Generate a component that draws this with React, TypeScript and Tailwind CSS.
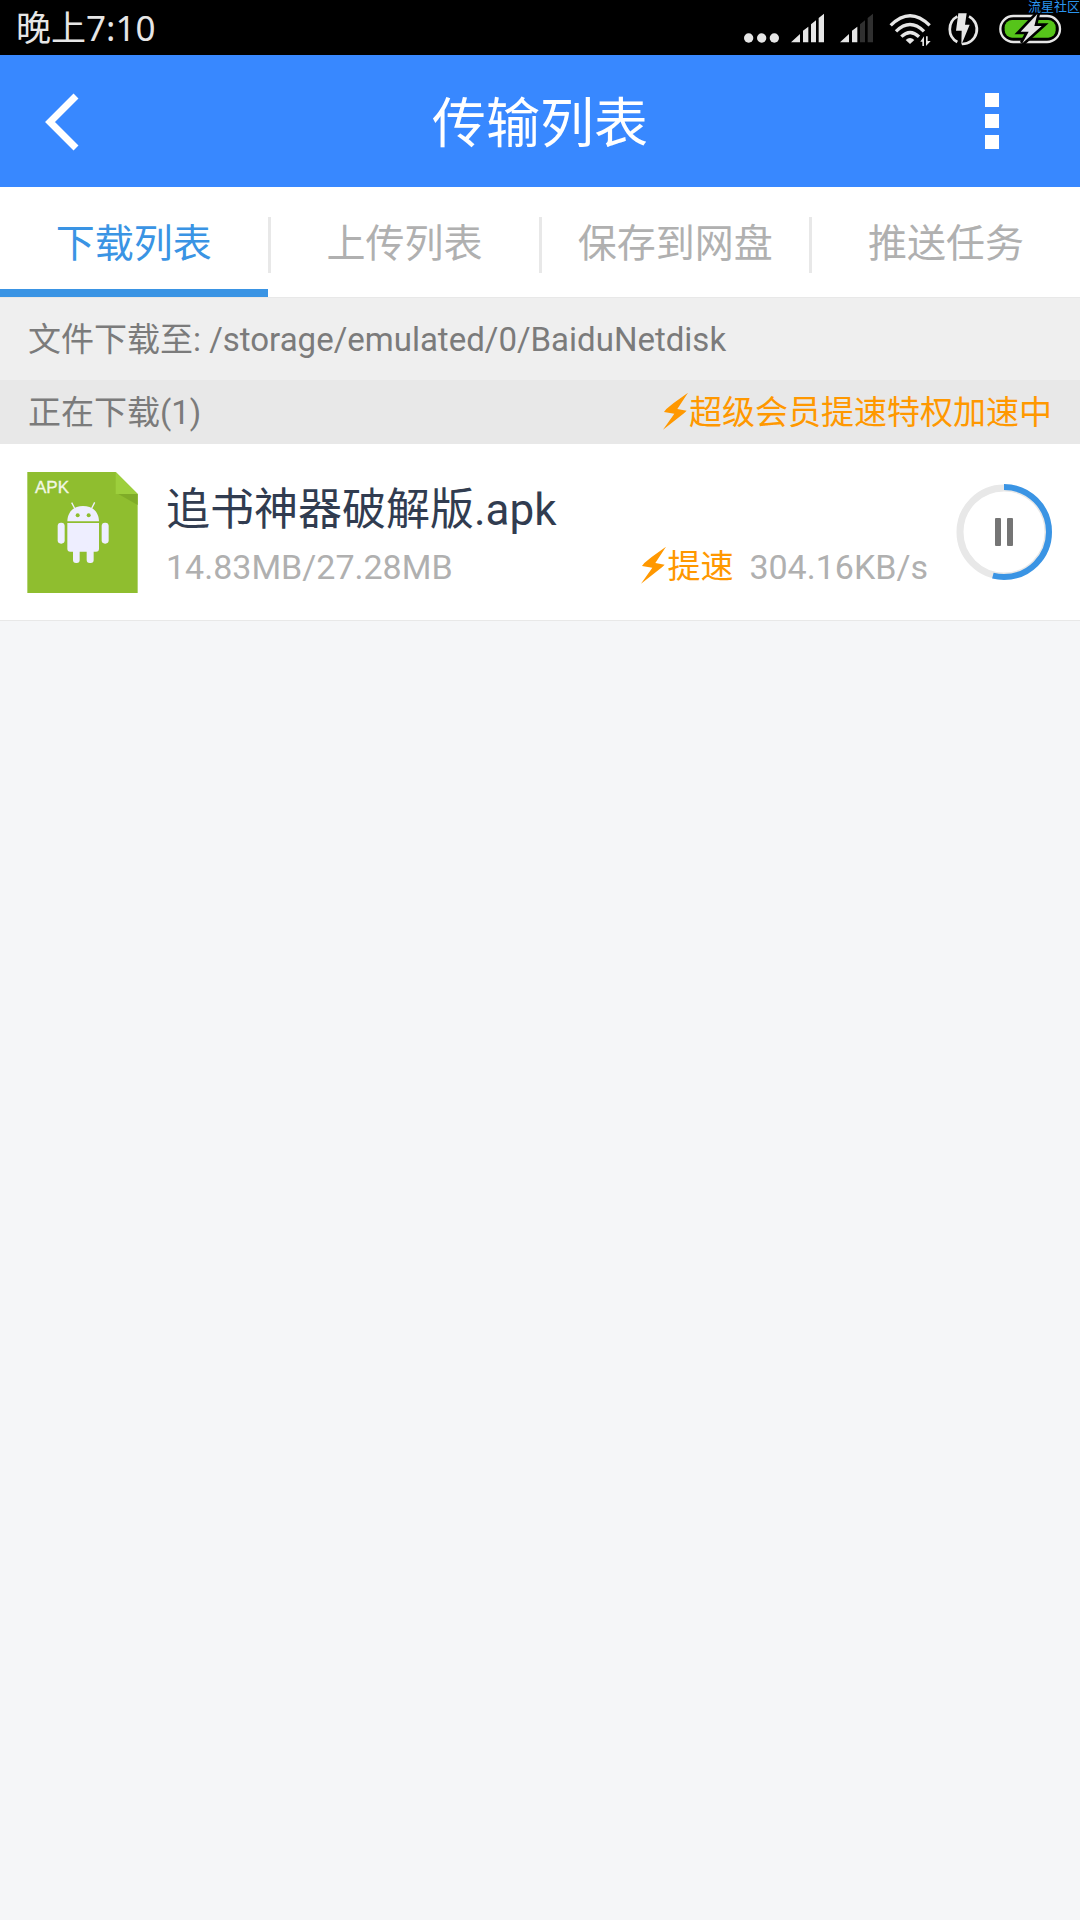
import React from "react";

const TABS = ["下载列表", "上传列表", "保存到网盘", "推送任务"];

const TASK = {
  name: "追书神器破解版.apk",
  done: 14.83,
  total: 27.28,
  speed: "304.16KB/s",
};

function Bolt() {
  return (
    <svg width="26" height="38" viewBox="68 315 78 114" className="mb-1" aria-hidden="true">
      <path d="M143 317 L100 348 L78 366 L71 375 L102 380 L68 428 L131 379 L139 371 L111 366 Z" fill="#ff9800" />
    </svg>
  );
}

function StatusIcons() {
  return (
    <svg width="330" height="40" viewBox="30 20 990 120" fill="#e6e6e6" aria-hidden="true">
      {/* network dots */}
      <circle cx="56" cy="110" r="14" />
      <circle cx="95" cy="110" r="14" />
      <circle cx="133" cy="110" r="14" />
      {/* sim 1 */}
      <path d="M183 123 L210 98 V123 Z M219 88 L235 76 V123 H219 Z M243 69 L258 57 V123 H243 Z M266 50 L282 37 V123 H266 Z" />
      {/* sim 2 */}
      <path d="M330 123 L357 98 V123 Z M366 88 L382 76 V123 H366 Z" />
      <path d="M390 69 L405 57 V123 H390 Z M413 50 L429 37 V123 H413 Z" fill="#303030" />
      {/* wifi */}
      <g fill="none" stroke="#e6e6e6" strokeWidth="10">
        <path d="M482 72 Q540 14 599 72" />
        <path d="M498 90 Q540 49 582 90" />
        <path d="M514 106 Q540 81 567 106" />
      </g>
      <path d="M527 116 Q540 104 553 116 L540 128 Z" />
      <path d="M571 121 L582 105 V134 H577 V121 Z M588 105 H593 V119 H602 L588 134 Z" />
      {/* quick charge */}
      <g fill="none" stroke="#e6e6e6" strokeWidth="8">
        <path d="M682 45 A44 44 0 0 0 682 122" />
        <path d="M717 45 A44 44 0 0 1 696 128" />
      </g>
      <path d="M685 36 H710 L705 70 H719 L694 131 L695 88 H678 Z" />
      {/* battery */}
      <rect x="811" y="44" width="179" height="78" rx="39" fill="none" stroke="#e6e6e6" strokeWidth="7" />
      <rect x="824" y="56" width="153" height="53" rx="22" fill="#56c41a" />
      <path
        d="M922 38 L872 91 H896 L877 126 L935 74 H913 Z"
        fill="#e6e6e6"
        stroke="#000"
        strokeWidth="16"
        paintOrder="stroke"
      />
    </svg>
  );
}

function ApkIcon() {
  return (
    <svg width="111" height="121" viewBox="81 96 333 363" className="shrink-0" role="img" aria-label="APK">
      <path d="M82 96 H347 L413 162 V459 H82 Z" fill="#8fbe2f" />
      <path d="M355 162 H413 V195 Z" fill="#7fac27" />
      <path d="M347 96 L413 162 H347 Z" fill="#9dcf3c" />
      <text
        x="105"
        y="158"
        fontSize="51"
        fontFamily="Liberation Sans, sans-serif"
        fill="#f2f7e4"
        stroke="#f2f7e4"
        strokeWidth="1"
      >
        APK
      </text>
      <g fill="#eeeeff">
        <path d="M202 244 C203 214 222 198 249 198 C277 198 296 214 297 244 Z" />
        <path d="M202 249 H297 V326 Q297 335 288 335 H211 Q202 335 202 326 Z" />
        <rect x="173" y="248" width="21" height="63" rx="10" />
        <rect x="305" y="248" width="21" height="63" rx="10" />
        <rect x="219" y="320" width="20" height="49" rx="9" />
        <rect x="260" y="320" width="21" height="49" rx="9" />
      </g>
      <path d="M215 188 L225 207 M284 187 L274 207" stroke="#eeeeff" strokeWidth="4" />
      <circle cx="233" cy="226" r="6" fill="#8fbe2f" />
      <circle cx="266" cy="226" r="6" fill="#8fbe2f" />
    </svg>
  );
}

function PauseButton({ percent }: { percent: number }) {
  return (
    <button type="button" aria-label="暂停" className="shrink-0">
      <svg width="96" height="96" viewBox="0 0 96 96" className="block">
        <circle cx="48" cy="48" r="44" fill="none" stroke="#e8e8e8" strokeWidth="7" />
        <circle
          cx="48"
          cy="48"
          r="45"
          fill="none"
          stroke="#3a94e4"
          strokeWidth="6"
          pathLength="100"
          strokeDasharray={`${percent} 100`}
          transform="rotate(-90 48 48)"
        />
        <rect x="39" y="34" width="6" height="28" rx="1" fill="#757575" />
        <rect x="51" y="34" width="6" height="28" rx="1" fill="#757575" />
      </svg>
    </button>
  );
}

export default function App() {
  return (
    <div className="min-h-screen bg-[#f5f6f8] font-[Roboto,'Noto_Sans_CJK_SC',sans-serif]">
      <div className="relative flex h-[55px] items-center justify-between bg-black pl-4 pr-[10px]">
        <span className="font-['Noto_Sans','Noto_Sans_CJK_SC',sans-serif] text-[35px] leading-[55px] text-[#e6e6e6]">晚上7:10</span>
        <StatusIcons />
        <span className="absolute right-0 top-0 text-[13px] leading-[13px] text-[#2b95ee]">流星社区</span>
      </div>

      <header className="flex h-[132px] items-center justify-between bg-[#3888ff] px-10">
        <button type="button" aria-label="返回" className="flex w-24">
          <svg width="44" height="60" viewBox="0 0 44 60" fill="none" stroke="#fff" strokeWidth="7">
            <path d="M36 5 L10 31 L36 57" />
          </svg>
        </button>
        <h1 className="pt-2 text-[54px] leading-[64px] text-white">传输列表</h1>
        <button type="button" aria-label="更多" className="flex w-24 flex-col items-center gap-[7px]">
          <span className="size-[14px] bg-white" />
          <span className="size-[14px] bg-white" />
          <span className="size-[14px] bg-white" />
        </button>
      </header>

      <nav className="flex h-[110px] bg-white">
        {TABS.map((tab, index) => (
          <React.Fragment key={tab}>
            {index > 0 && <span className="mt-[30px] h-[56px] w-[3px] bg-[#e8e8e8]" />}
            <button
              type="button"
              className={
                index === 0
                  ? "flex-1 border-b-8 border-[#3a94e4] pt-3 text-[39px] text-[#3a94e4]"
                  : "flex-1 border-b-8 border-transparent pt-3 text-[39px] text-[#b0b0b0]"
              }
            >
              {tab}
            </button>
          </React.Fragment>
        ))}
      </nav>

      <p className="h-[83px] border-t border-[#e8e8e8] bg-[#efefef] px-7 text-[33px] leading-[83px] text-[#7b7b7b]">
        文件下载至: /storage/emulated/0/BaiduNetdisk
      </p>

      <div className="flex h-16 items-center justify-between bg-[#e8e8e8] px-7 pt-[2px] text-[33px] text-[#7b7b7b]">
        <h2>正在下载(1)</h2>
        <p className="flex items-center text-[#ff9800]">
          <Bolt />
          超级会员提速特权加速中
        </p>
      </div>

      <main className="flex h-[177px] items-center gap-7 border-b border-[#e8e8e8] bg-white pl-[27px] pr-7">
        <ApkIcon />
        <div className="min-w-0 flex-1 pt-[10px]">
          <h3 className="truncate text-[44px] leading-[60px] text-[#313c50]">{TASK.name}</h3>
          <div className="flex items-center text-[34px] leading-[54px] text-[#b0b0b0]">
            <span className="flex-1">
              {TASK.done}MB/{TASK.total}MB
            </span>
            <span className="mr-4 flex items-center text-[33px] text-[#ff9800]">
              <Bolt />
              提速
            </span>
            <span>{TASK.speed}</span>
          </div>
        </div>
        <PauseButton percent={Math.floor((TASK.done / TASK.total) * 100)} />
      </main>
    </div>
  );
}
